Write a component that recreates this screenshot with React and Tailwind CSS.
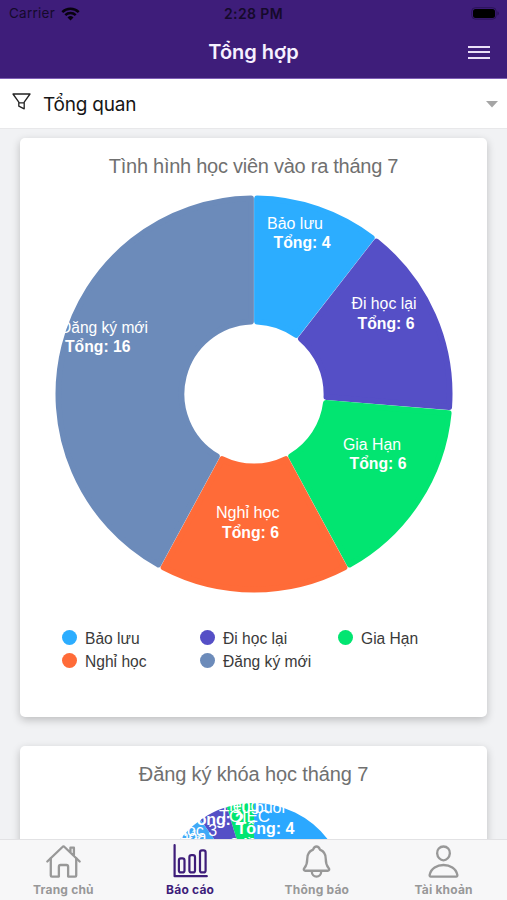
import React from "react";
import { IoHomeOutline, IoNotificationsOutline, IoPersonOutline } from "react-icons/io5";

const HELV = "font-['Liberation_Sans',Arial,sans-serif]";

const courses = [
  { name: "Bảo lưu", total: 4, color: "#2cadff", x: 247, y: 90.5, w: 56, tx: 253.5, ty: 110, tw: 57 },
  { name: "Đi học lại", total: 6, color: "#554fc6", x: 331.5, y: 171, w: 65, tx: 337.5, ty: 190.5, tw: 57 },
  { name: "Gia Hạn", total: 6, color: "#02e571", x: 323, y: 311.5, w: 58, tx: 329.5, ty: 331, tw: 57 },
  { name: "Nghỉ học", total: 6, color: "#ff6b38", x: 196, y: 380, w: 63.5, tx: 202, ty: 399.5, tw: 57 },
  { name: "Đăng ký mới", total: 16, color: "#6c8bba", x: 40, y: 194.5, w: 88, tx: 45, ty: 214, tw: 65.5 },
];

const rad = (deg) => (deg * Math.PI) / 180;

// Ring segment shrunk by `d` on each side, so that a round-joined stroke fills it back out.
function segment(cx, cy, outer, inner, from, to, d) {
  const R = outer - d;
  const r = inner + d;
  const pt = (radius, a) => `${cx + radius * Math.sin(a)} ${cy - radius * Math.cos(a)}`;
  const oShift = Math.asin(d / R);
  const iShift = Math.asin(d / r);
  const a = rad(from);
  const b = rad(to);
  const large = to - from > 180 ? 1 : 0;
  return `M${pt(R, a + oShift)}A${R} ${R} 0 ${large} 1 ${pt(R, b - oShift)}L${pt(r, b - iShift)}A${r} ${r} 0 ${large} 0 ${pt(r, a + iShift)}Z`;
}

function Donut() {
  const sum = courses.reduce((s, c) => s + c.total, 0);
  let acc = 0;
  const arcs = courses.map((c) => {
    const from = (acc / sum) * 360;
    acc += c.total;
    return { ...c, from, to: (acc / sum) * 360 };
  });
  return (
    <svg width="467" height="425" viewBox="0 0 467 425" className={`block ${HELV}`}>
      <g transform="translate(0 -44)">
        {arcs.map((s) => (
          <path key={s.name} d={segment(234, 256, 198.6, 69.5, s.from, s.to, 3)} fill={s.color} stroke={s.color} strokeWidth="5.8" strokeLinejoin="round" />
        ))}
        {arcs.map((s) => (
          <g key={s.name} fill="#fff" fontSize="16">
            <text x={s.x} y={s.y} textLength={s.w} lengthAdjust="spacingAndGlyphs">{s.name}</text>
            <text x={s.tx} y={s.ty} textLength={s.tw} lengthAdjust="spacingAndGlyphs" fontWeight="700">Tổng: {s.total}</text>
          </g>
        ))}
      </g>
    </svg>
  );
}

function CourseDonut() {
  return (
    <svg width="467" height="110" viewBox="20 790 467 110" className={`-mt-2 block overflow-visible ${HELV}`}>
      <path d={segment(254, 896, 93, 33, 0, 110, 1)} fill="#2ba8ff" stroke="#2ba8ff" strokeWidth="2" strokeLinejoin="round" />
      <path d={segment(254, 896, 93, 33, -17, 0, 1)} fill="#02e571" stroke="#02e571" strokeWidth="2" strokeLinejoin="round" />
      <path d={segment(254, 896, 93, 33, -35, -17, 1)} fill="#554fc6" stroke="#554fc6" strokeWidth="2" strokeLinejoin="round" />
      <path d={segment(254, 896, 93, 33, -100, -35, 1)} fill="#3fa9f7" stroke="#3fa9f7" strokeWidth="2" strokeLinejoin="round" />
      <g fill="#fff" fontSize="16">
        <text x="164" y="793">học</text>
        <text x="285" y="813" textAnchor="end">10 buổi</text>
        <text x="220" y="811">Tiếng</text>
        <text x="219" y="821.5" fontSize="17" textLength="51">TOIEC</text>
        <text x="187" y="824.5" fontWeight="700" textLength="57">Tổng: 2</text>
        <text x="236.5" y="833.5" fontWeight="700" textLength="58">Tổng: 4</text>
        <text x="178" y="836">học 3</text>
        <text x="169" y="842">Khóa</text>
        <text x="181" y="850" fontWeight="700">Tổng: 2 lần</text>
      </g>
    </svg>
  );
}

function StatusBar() {
  return (
    <div className="grid h-[27px] grid-cols-3 items-center px-2 text-[13.5px] text-[#150a2b]">
      <div className="flex items-center gap-1.5 pl-px tracking-[0.25px]">
        <span>Carrier</span>
        <svg width="19" height="14" viewBox="0 0 19 14" fill="none" stroke="#08020f" strokeWidth="2.5">
          <path d="M1.3 5.1a11.6 11.6 0 0 1 16.4 0M4.3 8.2a7.4 7.4 0 0 1 10.4 0" />
          <path d="M9.5 13.5L6.5 10.4a4.3 4.3 0 0 1 6 0Z" fill="#08020f" stroke="none" />
        </svg>
      </div>
      <div className="text-center text-[14px] font-semibold tracking-[0.4px]">2:28 PM</div>
      <svg width="28" height="13" viewBox="0 0 28 13" className="justify-self-end">
        <rect x="0.7" y="0.7" width="24.5" height="11.4" rx="3.6" fill="none" stroke="#2b1359" />
        <rect x="2" y="2" width="22" height="9" rx="2.5" fill="#000" />
        <path d="M26.4 4.3q1.5.6 1.5 2.1t-1.5 2.1z" fill="#2b1359" />
      </svg>
    </div>
  );
}

function BarsIcon({ className }) {
  return (
    <svg viewBox="0 0 37 37" className={className} fill="none" stroke="currentColor" strokeWidth="2.2" strokeLinecap="round" strokeLinejoin="round">
      <path d="M2.6 2v31.2h32.2" />
      <rect x="6.9" y="15.4" width="5.6" height="14" rx="2" />
      <rect x="17.4" y="12.2" width="5.6" height="17.2" rx="2" />
      <rect x="28" y="7.4" width="5.6" height="22" rx="2" />
    </svg>
  );
}

function Tab({ icon: Icon, label, active }) {
  return (
    <div className={`flex flex-1 flex-col items-center pt-[3px] ${active ? "text-[#3e1d7a]" : "text-[#989898]"}`}>
      <Icon className="size-[37px]" />
      <span className="mt-[2px] text-[12px] leading-[15px] font-bold tracking-[0.2px]">{label}</span>
    </div>
  );
}

export default function App() {
  return (
    <div className="flex h-[900px] w-[507px] flex-col overflow-hidden bg-[#f1f2f4] font-['Inter','Noto_Sans',sans-serif]">
      <header className="h-[79px] shrink-0 border-b border-[#7f5fb5] bg-[#3e1d7a]">
        <StatusBar />
        <div className="grid h-[50px] grid-cols-[1fr_auto_1fr] items-center px-[17px]">
          <span />
          <h1 className="text-[20px] leading-none font-semibold text-[#f6f0ff]">Tổng hợp</h1>
          <div className="flex w-[22px] flex-col gap-[3.5px] justify-self-end">
            <span className="h-[2px] bg-[#eadff8]" />
            <span className="h-[2px] bg-[#eadff8]" />
            <span className="h-[2px] bg-[#eadff8]" />
          </div>
        </div>
      </header>

      <div className="flex h-[50px] shrink-0 items-center border-b border-[#e8e8ea] bg-white pr-[9px] pl-3">
        <svg width="19" height="17" viewBox="0 0 19 17" fill="none" stroke="#222" strokeWidth="1.3" strokeLinejoin="round" className="-mt-[5px]">
          <path d="M1 1h17l-5.8 8.2v6.6l-5.4-2.6v-4zM6.8 9.8h5.4" />
        </svg>
        <span className="mt-[3px] ml-3 text-[19px] tracking-[-0.22px] text-[#161616]">Tổng quan</span>
        <svg width="12" height="7" viewBox="0 0 12 7" className="mt-px ml-auto">
          <path d="M0 0h12L6 6.5z" fill="#a5a5a5" />
        </svg>
      </div>

      <main className="flex min-h-0 flex-1 flex-col gap-[29px] overflow-hidden px-5 pt-[9px]">
        <section className="h-[579px] shrink-0 rounded-[5px] bg-white shadow-[0_3px_9px_rgba(0,0,0,0.22)]">
          <h2 className={`h-11 pt-4 text-center text-[20px] leading-6 tracking-[-0.26px] text-[#707070] ${HELV}`}>Tình hình học viên vào ra tháng 7</h2>
          <Donut />
          <ul className={`mt-[19px] ml-[42px] grid grid-cols-[138px_138px_138px] text-[16px] leading-[23px] text-[#3a3a3a] ${HELV}`}>
            {courses.map((c) => (
              <li key={c.name} className="flex items-center gap-2">
                <span className="size-[15px] rounded-full" style={{ backgroundColor: c.color }} />
                <span className="relative top-px text-[15.6px]">{c.name}</span>
              </li>
            ))}
          </ul>
        </section>
        <section className="h-[579px] shrink-0 rounded-[5px] bg-white shadow-[0_3px_9px_rgba(0,0,0,0.22)]">
          <h2 className={`h-[52px] pt-4 text-center text-[20px] leading-6 tracking-[-0.13px] text-[#707070] ${HELV}`}>Đăng ký khóa học tháng 7</h2>
          <CourseDonut />
        </section>
      </main>

      <nav className="flex h-[61px] shrink-0 border-t border-[#e2e2e4] bg-[#f7f7f8]">
        <Tab icon={IoHomeOutline} label="Trang chủ" />
        <Tab icon={BarsIcon} label="Báo cáo" active />
        <Tab icon={IoNotificationsOutline} label="Thông báo" />
        <Tab icon={IoPersonOutline} label="Tài khoản" />
      </nav>
    </div>
  );
}
